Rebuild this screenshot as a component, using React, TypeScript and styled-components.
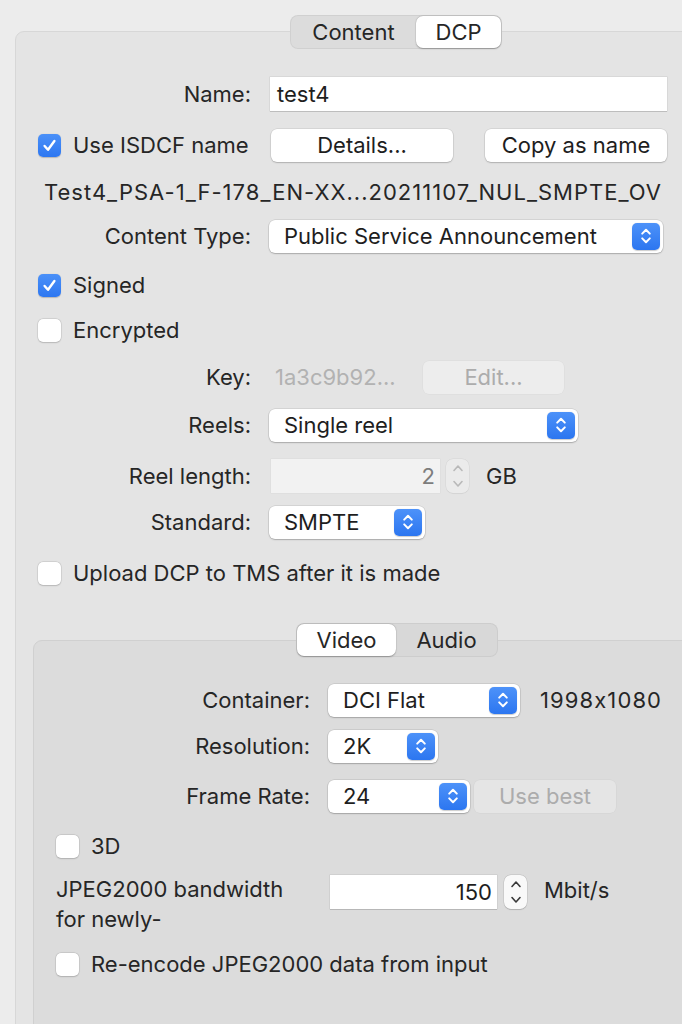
import React from 'react';
import styled, { createGlobalStyle } from 'styled-components';

const Global = createGlobalStyle`
  html, body { margin: 0; padding: 0; background: #ececec; }
  body {
    font-family: Inter, "Helvetica Neue", "Liberation Sans", sans-serif;
    font-size: 22px;
    font-feature-settings: "calt" 0;
    color: #262626;
    -webkit-font-smoothing: antialiased;
  }
`;

const Window = styled.div`
  width: 682px;
  height: 1024px;
  overflow: hidden;
  background: #ececec;
  padding-top: 15px;
  box-sizing: border-box;
`;

const TabBar = styled.div<{ $left: number; $tone: string }>`
  position: relative;
  z-index: 1;
  display: flex;
  width: max-content;
  height: 34px;
  box-sizing: border-box;
  margin-left: ${p => p.$left}px;
  padding: 1px;
  border-radius: 8px;
  background: ${p => p.$tone};
  box-shadow: inset 0 0 0 1px rgba(0, 0, 0, 0.05);
`;

const Tab = styled.div<{ $active?: boolean; $w: number }>`
  display: flex;
  align-items: center;
  justify-content: center;
  width: ${p => p.$w}px;
  border-radius: 7px;
  background: ${p => (p.$active ? '#ffffff' : 'transparent')};
  box-shadow: ${p =>
    p.$active ? '0 0.5px 1.5px rgba(0,0,0,0.28), 0 0 0 0.5px rgba(0,0,0,0.06)' : 'none'};
`;

const Panel = styled.div<{ $tone: string; $border: string; $indent: number; $overlap: number }>`
  margin-top: -${p => p.$overlap}px;
  margin-left: ${p => p.$indent}px;
  margin-right: -40px;
  background: ${p => p.$tone};
  border: 1px solid ${p => p.$border};
  border-radius: 9px;
  padding-bottom: 120px;
`;

const Row = styled.div<{ $mt: number; $h?: number; $pl?: number; $align?: string }>`
  display: flex;
  align-items: ${p => p.$align ?? 'center'};
  height: ${p => p.$h ?? 34}px;
  margin-top: ${p => p.$mt}px;
  padding-left: ${p => p.$pl ?? 22}px;
  white-space: nowrap;
`;

const Label = styled.div<{ $w: number; $gap: number }>`
  flex-shrink: 0;
  width: ${p => p.$w}px;
  margin-right: ${p => p.$gap}px;
  text-align: right;
`;

const CheckLabel = styled.div<{ $w?: number }>`
  display: flex;
  align-items: center;
  flex-shrink: 0;
  width: ${p => (p.$w ? `${p.$w}px` : 'auto')};
`;

const PlainText = styled.span<{ $ml?: number; $muted?: boolean; $w?: number; $ls?: number }>`
  flex-shrink: 0;
  width: ${p => (p.$w ? `${p.$w}px` : 'auto')};
  margin-left: ${p => p.$ml ?? 0}px;
  letter-spacing: ${p => p.$ls ?? 0}px;
  color: ${p => (p.$muted ? '#b2b2b2' : '#262626')};
`;

const IsdcfName = styled.span`
  letter-spacing: 1.02px;
`;

const WrapLabel = styled.div`
  width: 274px;
  line-height: 30px;
  white-space: normal;
`;

const TextField = styled.div<{ $w: number; $disabled?: boolean; $right?: boolean; $mt?: number }>`
  display: flex;
  align-items: center;
  justify-content: ${p => (p.$right ? 'flex-end' : 'flex-start')};
  flex-shrink: 0;
  width: ${p => p.$w}px;
  height: 34px;
  box-sizing: border-box;
  margin-top: ${p => p.$mt ?? 0}px;
  padding: 0 ${p => (p.$right ? 5 : 7)}px;
  background: ${p => (p.$disabled ? '#f2f2f2' : '#ffffff')};
  color: ${p => (p.$disabled ? '#7d7d7d' : '#1e1e1e')};
  box-shadow: ${p =>
    p.$disabled
      ? '0 0 0 0.5px rgba(0,0,0,0.04)'
      : '0 0 0 0.5px rgba(0,0,0,0.1), 0 1px 0 rgba(0,0,0,0.12)'};
`;

const Select = styled.div<{ $w: number }>`
  display: flex;
  align-items: center;
  flex-shrink: 0;
  width: ${p => p.$w}px;
  height: 33px;
  box-sizing: border-box;
  padding: 0 3px 0 15px;
  background: #ffffff;
  border-radius: 6px;
  box-shadow: 0 0 0 0.5px rgba(0, 0, 0, 0.14), 0 1px 1.5px rgba(0, 0, 0, 0.2);
`;

const SelectText = styled.span`
  flex: 1;
  color: #1e1e1e;
`;

const BlueStepper = styled.span`
  display: flex;
  align-items: center;
  justify-content: center;
  width: 28px;
  height: 27px;
  border-radius: 5px;
  background: linear-gradient(#4d92f9, #2c76f0);
  box-shadow: 0 0.5px 1px rgba(0, 0, 0, 0.2);
`;

const Button = styled.div<{ $w: number; $disabled?: boolean; $ml?: number; $bg?: string }>`
  display: flex;
  align-items: center;
  justify-content: center;
  flex-shrink: 0;
  width: ${p => p.$w}px;
  height: 33px;
  margin-left: ${p => p.$ml ?? 0}px;
  border-radius: 6px;
  background: ${p => (p.$disabled ? p.$bg ?? '#eeeeee' : '#ffffff')};
  color: ${p => (p.$disabled ? '#acacac' : '#1e1e1e')};
  box-shadow: ${p =>
    p.$disabled
      ? '0 0 0 0.5px rgba(0,0,0,0.04)'
      : '0 0 0 0.5px rgba(0,0,0,0.12), 0 1px 1.5px rgba(0,0,0,0.18)'};
`;

const Box = styled.span<{ $checked?: boolean }>`
  display: flex;
  align-items: center;
  justify-content: center;
  flex-shrink: 0;
  width: 23px;
  height: 23px;
  box-sizing: border-box;
  margin-right: 12px;
  border-radius: 5px;
  background: ${p => (p.$checked ? 'linear-gradient(#4a90f8, #2d77f1)' : '#ffffff')};
  box-shadow: ${p =>
    p.$checked
      ? '0 0.5px 1px rgba(0,0,0,0.2)'
      : '0 0 0 0.5px rgba(0,0,0,0.12), 0 0.5px 1.5px rgba(0,0,0,0.15)'};
`;

const NumStepper = styled.span<{ $disabled?: boolean; $ml: number; $mt?: number }>`
  display: flex;
  flex-direction: column;
  align-items: center;
  justify-content: space-between;
  flex-shrink: 0;
  width: 23px;
  height: 34px;
  box-sizing: border-box;
  margin-left: ${p => p.$ml}px;
  margin-top: ${p => p.$mt ?? 0}px;
  padding: 5px 0;
  border-radius: 7px;
  background: ${p => (p.$disabled ? '#ebebeb' : '#f9f9f9')};
  box-shadow: 0 0 0 0.5px rgba(0, 0, 0, ${p => (p.$disabled ? 0.06 : 0.12)}),
    0 0.5px 1px rgba(0, 0, 0, ${p => (p.$disabled ? 0.04 : 0.14)});
`;

const Chevrons = () => (
  <svg width="14" height="22" viewBox="0 0 14 22" fill="none">
    <path d="M3.2 8.6 L7 4.8 L10.8 8.6" stroke="#fff" strokeWidth="2" strokeLinecap="round" strokeLinejoin="round" />
    <path d="M3.2 13.4 L7 17.2 L10.8 13.4" stroke="#fff" strokeWidth="2" strokeLinecap="round" strokeLinejoin="round" />
  </svg>
);

const Check = () => (
  <svg width="15" height="15" viewBox="0 0 15 15" fill="none">
    <path d="M2.6 8 L6 11.8 L12.4 3" stroke="#fff" strokeWidth="2.4" strokeLinecap="round" strokeLinejoin="round" />
  </svg>
);

const Arrow = ({ up, color }: { up?: boolean; color: string }) => (
  <svg width="12" height="8" viewBox="0 0 12 8" fill="none">
    <path
      d={up ? 'M2 6.5 L6 2 L10 6.5' : 'M2 1.5 L6 6 L10 1.5'}
      stroke={color}
      strokeWidth="1.6"
      strokeLinecap="round"
      strokeLinejoin="round"
    />
  </svg>
);

const PopUp = ({ w, value }: { w: number; value: string }) => (
  <Select $w={w}>
    <SelectText>{value}</SelectText>
    <BlueStepper>
      <Chevrons />
    </BlueStepper>
  </Select>
);

const CheckRow = ({ mt, checked, label }: { mt: number; checked?: boolean; label: string }) => (
  <Row $mt={mt}>
    <Box $checked={checked}>{checked && <Check />}</Box>
    <span>{label}</span>
  </Row>
);

const OUTER_LABEL = 213;
const OUTER_GAP = 19;
const INNER_LABEL = 254;
const INNER_GAP = 18;

export default function App() {
  return (
    <>
      <Global />
      <Window>
        <TabBar $left={290} $tone="#dcdcdc">
          <Tab $w={125}>Content</Tab>
          <Tab $w={85} $active>
            DCP
          </Tab>
        </TabBar>
        <Panel $tone="#e4e4e4" $border="#d7d7d7" $indent={15} $overlap={18}>
          <Row $mt={45}>
            <Label $w={OUTER_LABEL} $gap={OUTER_GAP}>Name:</Label>
            <TextField $w={397}>test4</TextField>
          </Row>
          <Row $mt={17}>
            <CheckLabel $w={233}>
              <Box $checked>
                <Check />
              </Box>
              <span>Use ISDCF name</span>
            </CheckLabel>
            <Button $w={182}>Details...</Button>
            <Button $w={182} $ml={32}>Copy as name</Button>
          </Row>
          <Row $mt={13} $pl={28}>
            <IsdcfName>Test4_PSA-1_F-178_EN-XX...20211107_NUL_SMPTE_OV</IsdcfName>
          </Row>
          <Row $mt={10}>
            <Label $w={OUTER_LABEL} $gap={OUTER_GAP - 1}>Content Type:</Label>
            <PopUp w={394} value="Public Service Announcement" />
          </Row>
          <CheckRow mt={15} checked label="Signed" />
          <CheckRow mt={11} label="Encrypted" />
          <Row $mt={13}>
            <Label $w={OUTER_LABEL} $gap={OUTER_GAP + 5}>Key:</Label>
            <PlainText $muted $w={148}>
              1a3c9b92...
            </PlainText>
            <Button $w={141} $disabled $bg="#ededed">
              Edit...
            </Button>
          </Row>
          <Row $mt={14}>
            <Label $w={OUTER_LABEL} $gap={OUTER_GAP - 1}>Reels:</Label>
            <PopUp w={309} value="Single reel" />
          </Row>
          <Row $mt={17}>
            <Label $w={OUTER_LABEL} $gap={OUTER_GAP + 1}>Reel length:</Label>
            <TextField $w={169} $disabled $right>
              2
            </TextField>
            <NumStepper $disabled $ml={6}>
              <Arrow up color="#b9b9b9" />
              <Arrow color="#b9b9b9" />
            </NumStepper>
            <PlainText $ml={17}>GB</PlainText>
          </Row>
          <Row $mt={12}>
            <Label $w={OUTER_LABEL} $gap={OUTER_GAP - 1}>Standard:</Label>
            <PopUp w={156} value="SMPTE" />
          </Row>
          <CheckRow mt={17} label="Upload DCP to TMS after it is made" />

          <TabBar $left={280} $tone="#d8d8d8" style={{ marginTop: 33 }}>
            <Tab $w={99} $active>
              Video
            </Tab>
            <Tab $w={101}>Audio</Tab>
          </TabBar>
          <Panel $tone="#dcdcdc" $border="#d0d0d0" $indent={17} $overlap={17}>
            <Row $mt={42}>
              <Label $w={INNER_LABEL} $gap={INNER_GAP}>Container:</Label>
              <PopUp w={192} value="DCI Flat" />
              <PlainText $ml={20} $ls={1.1}>
                1998x1080
              </PlainText>
            </Row>
            <Row $mt={12}>
              <Label $w={INNER_LABEL} $gap={INNER_GAP}>Resolution:</Label>
              <PopUp w={110} value="2K" />
            </Row>
            <Row $mt={16}>
              <Label $w={INNER_LABEL} $gap={INNER_GAP}>Frame Rate:</Label>
              <PopUp w={142} value="24" />
              <Button $w={142} $ml={4} $disabled $bg="#e5e5e5">
                Use best
              </Button>
            </Row>
            <CheckRow mt={16} label="3D" />
            <Row $mt={11} $h={60} $align="flex-start">
              <WrapLabel>
                JPEG2000 bandwidth
                <br />
                for newly-
              </WrapLabel>
              <TextField $w={167} $right $mt={1}>
                150
              </TextField>
              <NumStepper $ml={7} $mt={1}>
                <Arrow up color="#3a3a3a" />
                <Arrow color="#3a3a3a" />
              </NumStepper>
              <PlainText $ml={17} style={{ marginTop: 3 }}>
                Mbit/s
              </PlainText>
            </Row>
            <CheckRow mt={13} label="Re-encode JPEG2000 data from input" />
          </Panel>
        </Panel>
      </Window>
    </>
  );
}
